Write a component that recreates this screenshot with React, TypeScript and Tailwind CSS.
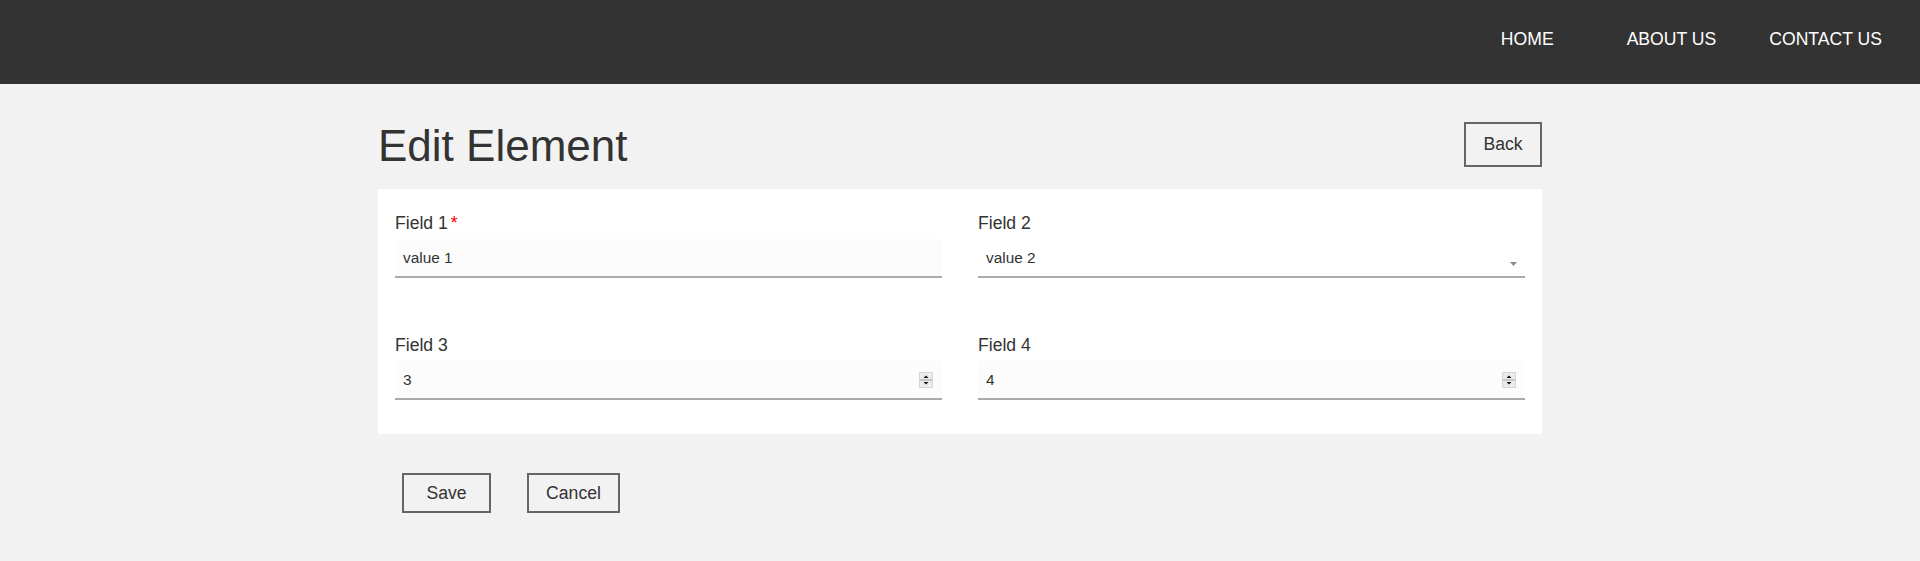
import React from 'react';

const font = { fontFamily: '"Liberation Sans", Arial, sans-serif' };

function Spinner() {
  return (
    <svg className="absolute right-[9px] top-[11px]" width="14" height="16" viewBox="0 0 14 16">
      <rect x="0.5" y="0.5" width="13" height="15" fill="#ececec" stroke="#d6d6d6" />
      <line x1="1" y1="8" x2="13" y2="8" stroke="#a0a0a0" />
      <path d="M4.5 6 L9.5 6 L7 3.5 Z" fill="#111" />
      <path d="M4.5 10 L9.5 10 L7 12.5 Z" fill="#111" />
    </svg>
  );
}

function Field({
  label,
  value,
  required,
  kind,
}: {
  label: string;
  value: string;
  required?: boolean;
  kind: 'text' | 'select' | 'number';
}) {
  return (
    <div className="flex flex-col">
      <label className="text-[17.6px] leading-[20px] text-[#333]">
        {label}
        {required && <span className="ml-[3px] text-[#ff0000]">*</span>}
      </label>
      <div
        className={`relative mt-[6px] h-[39px] border-b-2 border-[#aaaaaa] flex items-center px-[8px] text-[15.4px] text-[#333] ${
          kind === 'select' ? 'bg-white' : 'bg-[#fcfcfc]'
        }`}
      >
        <span>{value}</span>
        {kind === 'select' && (
          <svg className="absolute right-[8px] top-[23px]" width="7" height="4" viewBox="0 0 7 4">
            <path d="M0 0 L7 0 L3.5 4 Z" fill="#8a8a8a" />
          </svg>
        )}
        {kind === 'number' && <Spinner />}
      </div>
    </div>
  );
}

export default function App() {
  return (
    <div className="min-h-screen bg-[#f2f2f2]" style={font}>
      {/* top bar */}
      <header className="h-[84px] bg-[#333333] flex justify-end items-start pt-[29px] pr-[38px] text-white text-[17.6px] leading-[20px]">
        <a className="cursor-pointer">HOME</a>
        <a className="ml-[73px] cursor-pointer">ABOUT US</a>
        <a className="ml-[53px] cursor-pointer">CONTACT US</a>
      </header>

      <main className="w-[1164px] mx-auto pt-[37px] pb-[40px]">
        <div className="flex justify-between items-start">
          <h1 className="text-[44px] leading-[50px] text-[#333]">Edit Element</h1>
          <button className="mt-[1px] h-[45px] w-[78px] border-2 border-[#666] text-[17.6px] text-[#333] bg-transparent">
            Back
          </button>
        </div>

        <div className="mt-[18px] bg-white pt-[24px] px-[17px] pb-[34px]">
          <div className="grid grid-cols-2 gap-x-[36px] gap-y-[57px]">
            <Field label="Field 1" value="value 1" required kind="text" />
            <Field label="Field 2" value="value 2" kind="select" />
            <Field label="Field 3" value="3" kind="number" />
            <Field label="Field 4" value="4" kind="number" />
          </div>
        </div>

        <div className="mt-[39px] ml-[24px] flex gap-[36px]">
          <button className="h-[40px] w-[89px] border-2 border-[#666] text-[17.6px] text-[#333]">Save</button>
          <button className="h-[40px] w-[93px] border-2 border-[#666] text-[17.6px] text-[#333]">Cancel</button>
        </div>
      </main>
    </div>
  );
}
